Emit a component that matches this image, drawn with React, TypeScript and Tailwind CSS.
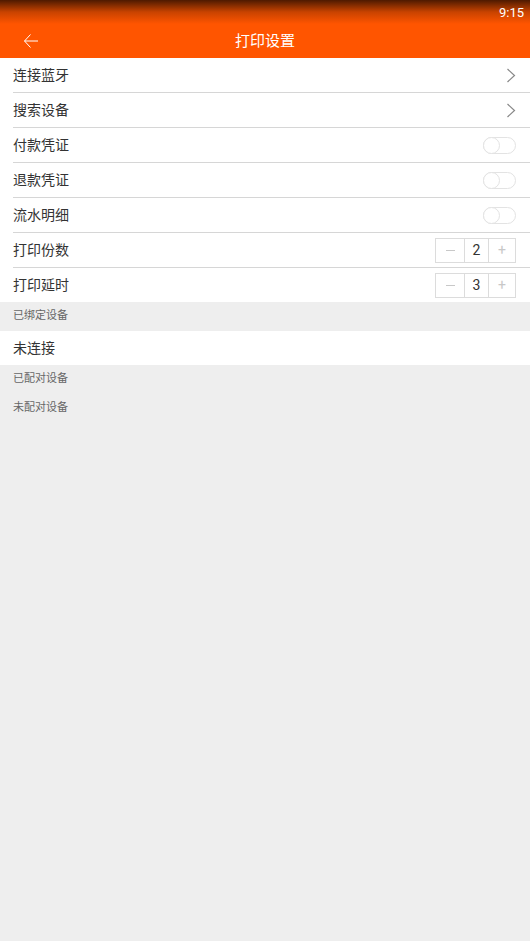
import { useState } from 'react';

const FONT = 'font-["Roboto","Noto_Sans_CJK_SC",sans-serif]';

function Chevron() {
  return (
    <svg width="10" height="15" viewBox="0 0 10 15" className="shrink-0">
      <path d="M1.5 1 L8.5 7.5 L1.5 14" fill="none" stroke="#888" strokeWidth="1.2" />
    </svg>
  );
}

function Toggle({ on, onClick }: { on: boolean; onClick: () => void }) {
  return (
    <button
      onClick={onClick}
      className="relative w-[33px] h-[17px] rounded-full border border-[#e3e3e3] bg-white"
    >
      <span
        className={`absolute top-[-1px] w-[17px] h-[17px] rounded-full border border-[#e3e3e3] bg-white ${on ? 'right-[-1px]' : 'left-[-1px]'}`}
      />
    </button>
  );
}

function Stepper({ value, onChange }: { value: number; onChange: (v: number) => void }) {
  return (
    <div className="flex h-[25px] border border-[#dcdcdc]">
      <button onClick={() => onChange(Math.max(1, value - 1))} className="w-[28px] flex items-center justify-center">
        <span className="block w-[9px] h-px bg-[#c8c8c8]" />
      </button>
      <div className="w-[25px] flex items-center justify-center border-x border-[#dcdcdc] text-[14px] text-[#333]">{value}</div>
      <button onClick={() => onChange(value + 1)} className="w-[26px] flex items-center justify-center text-[14px] text-[#c8c8c8]">
        +
      </button>
    </div>
  );
}

function Row({ label, last, children }: { label: string; last?: boolean; children?: React.ReactNode }) {
  return (
    <div className="bg-white pl-[13px]">
      <div
        className={`flex items-center justify-between pr-[14px] ${last ? 'h-[34px]' : 'h-[35px] border-b border-[#d6d6d6]'}`}
      >
        <span className="text-[14px] text-[#333]">{label}</span>
        {children}
      </div>
    </div>
  );
}

function SectionLabel({ text }: { text: string }) {
  return <div className="h-[29px] flex items-center pl-[13px] text-[11px] text-[#666]">{text}</div>;
}

export default function App() {
  const [toggles, setToggles] = useState([false, false, false]);
  const [copies, setCopies] = useState(2);
  const [delay, setDelay] = useState(3);

  const flip = (i: number) => setToggles((t) => t.map((v, j) => (j === i ? !v : v)));

  return (
    <div className={`w-[530px] h-[941px] bg-[#eeeeee] ${FONT}`}>
      {/* header incl. status bar */}
      <div className="h-[58px] bg-[linear-gradient(to_bottom,#4e1a00_0px,#c84300_12px,#ff5500_24px)]">
        <div className="h-[24px] flex items-center justify-end pr-[6px] pt-[1px] text-[13px] text-white">9:15</div>
        <div className="relative h-[34px] flex items-center justify-center">
          <svg width="16" height="16" viewBox="0 0 16 16" className="absolute left-[23px] top-[9px]">
            <path d="M15 8 H1.5 M7.5 1.5 L1.5 8 L7.5 14.5" fill="none" stroke="#fff" strokeWidth="1" />
          </svg>
          <span className="text-[15px] text-white">打印设置</span>
        </div>
      </div>

      <Row label="连接蓝牙"><Chevron /></Row>
      <Row label="搜索设备"><Chevron /></Row>
      <Row label="付款凭证"><Toggle on={toggles[0]} onClick={() => flip(0)} /></Row>
      <Row label="退款凭证"><Toggle on={toggles[1]} onClick={() => flip(1)} /></Row>
      <Row label="流水明细"><Toggle on={toggles[2]} onClick={() => flip(2)} /></Row>
      <Row label="打印份数"><Stepper value={copies} onChange={setCopies} /></Row>
      <Row label="打印延时" last><Stepper value={delay} onChange={setDelay} /></Row>

      <SectionLabel text="已绑定设备" />
      <div className="h-[34px] bg-white flex items-center pl-[13px] text-[14px] text-[#333]">未连接</div>
      <SectionLabel text="已配对设备" />
      <SectionLabel text="未配对设备" />
    </div>
  );
}
